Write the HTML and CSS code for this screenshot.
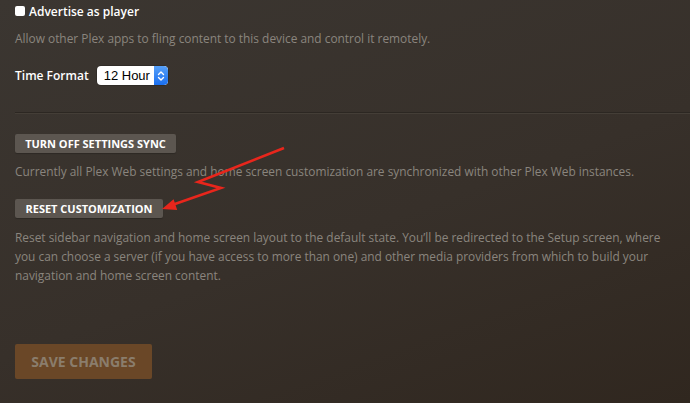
FILE: index.html
```html
<!DOCTYPE html>
<html>
<head>
<meta charset="utf-8">
<link rel="stylesheet" href="styles.css">
</head>
<body>
<div class="page">
  <label class="check-row">
    <span class="checkbox"></span>
    <span class="check-label">Advertise as player</span>
  </label>
  <p class="help help-first">Allow other Plex apps to fling content to this device and control it remotely.</p>
  <div class="field-row">
    <span class="field-label">Time Format</span>
    <span class="select">
      <span class="select-value">12 Hour</span>
      <span class="select-arrows">
        <svg width="8" height="12" viewBox="0 0 8 12"><path d="M1.5 4.5 L4 2 L6.5 4.5 M1.5 7.5 L4 10 L6.5 7.5" fill="none" stroke="#fff" stroke-width="1.4" stroke-linecap="round" stroke-linejoin="round"/></svg>
      </span>
    </span>
  </div>
  <div class="divider"></div>
  <button class="btn btn-sync">TURN OFF SETTINGS SYNC</button>
  <p class="help help-sync">Currently all Plex Web settings and home screen customization are synchronized with other Plex Web instances.</p>
  <button class="btn btn-reset">RESET CUSTOMIZATION</button>
  <p class="help help-reset">Reset sidebar navigation and home screen layout to the default state. You’ll be redirected to the Setup screen, where you can choose a server (if you have access to more than one) and other media providers from which to build your navigation and home screen content.</p>
  <button class="btn-save">SAVE CHANGES</button>
</div>
<svg class="annotation" width="690" height="403" viewBox="0 0 690 403">
  <polyline points="284,148 198,182 221,188 172,205" fill="none" stroke="#e8261c" stroke-width="2.6" stroke-linejoin="miter"/>
  <polygon points="162,209 173.6,199.2 177.2,210" fill="#e8261c"/>
</svg>
</body>
</html>
```
FILE: styles.css
```css
html, body {
  margin: 0;
  padding: 0;
  height: 100%;
}
body {
  background: linear-gradient(160deg, #3b3631 0%, #37302a 55%, #30271f 100%);
  font-family: "Open Sans", "DejaVu Sans", sans-serif;
  overflow: hidden;
  position: relative;
}
.page {
  padding: 0 0 0 15px;
  display: flex;
  flex-direction: column;
  align-items: flex-start;
}
.check-row {
  display: flex;
  align-items: center;
  gap: 4px;
  height: 22px;
}
.checkbox {
  width: 10px;
  height: 10px;
  background: #fff;
  border-radius: 2px;
}
.check-label {
  color: #fff;
  font-size: 12px;
  font-weight: 600;
}
.help {
  margin: 0;
  color: #8a857e;
  font-size: 11.9px;
  line-height: 19px;
}
.help-first {
  margin-top: 7px;
}
.field-row {
  display: flex;
  align-items: center;
  gap: 8px;
  margin-top: 18px;
}
.field-label {
  color: #fff;
  font-size: 12px;
  font-weight: 600;
}
.select {
  display: flex;
  width: 71px;
  height: 19px;
  background: #fff;
  border-radius: 4px;
  overflow: hidden;
  box-shadow: 0 0 0 0.5px rgba(0,0,0,0.3);
}
.select-value {
  flex: 1;
  font-family: "Liberation Sans", Arial, sans-serif;
  font-size: 13px;
  color: #000;
  line-height: 19px;
  padding-left: 7px;
}
.select-arrows {
  width: 14px;
  display: flex;
  align-items: center;
  justify-content: center;
  background: linear-gradient(#56a0f8, #1a6ff0);
  border-radius: 0 4px 4px 0;
}
.divider {
  align-self: stretch;
  height: 1px;
  background: #2c2722;
  border-bottom: 1px solid #443e37;
  margin-top: 27px;
}
.btn {
  font-family: "Open Sans", sans-serif;
  font-weight: 700;
  font-size: 11px;
  color: #fff;
  background: #5c5650;
  border: 0;
  border-radius: 2px;
  height: 19px;
  padding: 0;
  line-height: 19px;
  white-space: nowrap;
  text-align: center;
  box-shadow: 0 1px 1px rgba(0,0,0,0.2);
}
.btn-sync {
  margin-top: 20px;
  width: 161px;
}
.help-sync {
  margin-top: 9px;
}
.btn-reset {
  margin-top: 18px;
  width: 148px;
}
.help-reset {
  margin-top: 10px;
  max-width: 655px;
}
.btn-save {
  margin-top: 59px;
  width: 137px;
  height: 35px;
  border: 0;
  border-radius: 2px;
  background: #6a4727;
  color: #8a7d6c;
  font-family: "Open Sans", sans-serif;
  font-weight: 700;
  font-size: 14px;
}
.annotation {
  position: absolute;
  left: 0;
  top: 0;
  pointer-events: none;
}
```
